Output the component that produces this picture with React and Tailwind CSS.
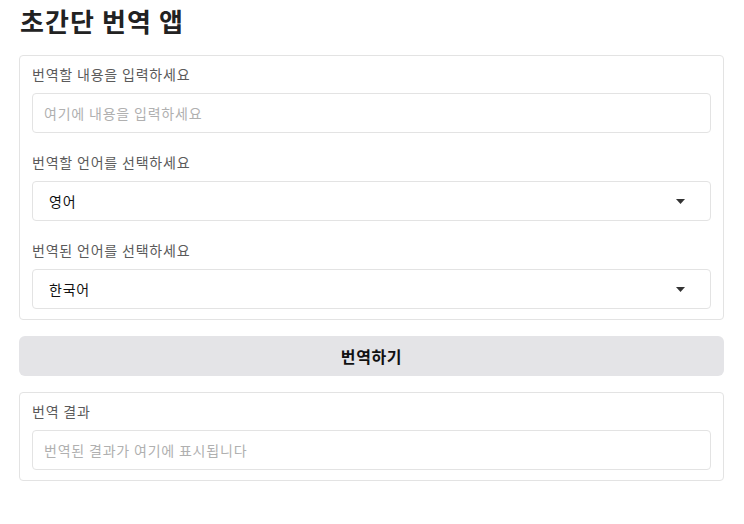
import { useState } from 'react';

const FONT = { fontFamily: '"Noto Sans CJK KR", "Noto Sans", sans-serif' };

function Caret() {
  return (
    <svg className="w-[9px] h-[5px] text-[#333]" viewBox="0 0 9 5" fill="currentColor">
      <path d="M0 0h9L4.5 5z" />
    </svg>
  );
}

function SelectBox({ value }) {
  return (
    <div className="h-[40px] border border-[#e3e3e3] rounded-[4px] bg-white flex items-center justify-between pl-[16px] pr-[25px]">
      <span className="text-[14px] tracking-[0.8px] text-[#111]">{value}</span>
      <Caret />
    </div>
  );
}

function Field({ label, children, first }) {
  return (
    <div className={first ? '' : 'mt-[19px]'}>
      <div className="text-[14px] leading-[20px] tracking-[0.8px] text-[#5a5a5a] mb-[9px]">{label}</div>
      {children}
    </div>
  );
}

export default function App() {
  const [text, setText] = useState('');

  return (
    <div className="min-h-screen bg-white pl-[19px] pr-[20px]" style={FONT}>
      <h1 className="text-[26px] leading-[36px] tracking-[1.1px] font-bold text-[#222] pt-[3px] pl-[1px] mb-[16px]">
        초간단 번역 앱
      </h1>

      <div className="border border-[#e3e3e3] rounded-[4px] px-[12px] pt-[8px] pb-[10px]">
        <Field label="번역할 내용을 입력하세요" first>
          <input
            value={text}
            onChange={(e) => setText(e.target.value)}
            placeholder="여기에 내용을 입력하세요"
            className="w-full h-[40px] border border-[#e3e3e3] rounded-[4px] px-[11px] text-[14px] tracking-[0.8px] text-[#111] placeholder:text-[#b0b0b0] outline-none"
          />
        </Field>
        <Field label="번역할 언어를 선택하세요">
          <SelectBox value="영어" />
        </Field>
        <Field label="번역된 언어를 선택하세요">
          <SelectBox value="한국어" />
        </Field>
      </div>

      <button
        type="button"
        className="w-full h-[40px] mt-[16px] rounded-[6px] bg-[#e4e4e7] text-[16px] tracking-[0.6px] font-bold text-[#111]"
      >
        번역하기
      </button>

      <div className="border border-[#e3e3e3] rounded-[4px] px-[12px] pt-[8px] pb-[10px] mt-[16px]">
        <Field label="번역 결과" first>
          <div className="h-[40px] border border-[#e3e3e3] rounded-[4px] px-[11px] flex items-center text-[14px] tracking-[0.8px] text-[#b0b0b0]">
            번역된 결과가 여기에 표시됩니다
          </div>
        </Field>
      </div>
    </div>
  );
}
